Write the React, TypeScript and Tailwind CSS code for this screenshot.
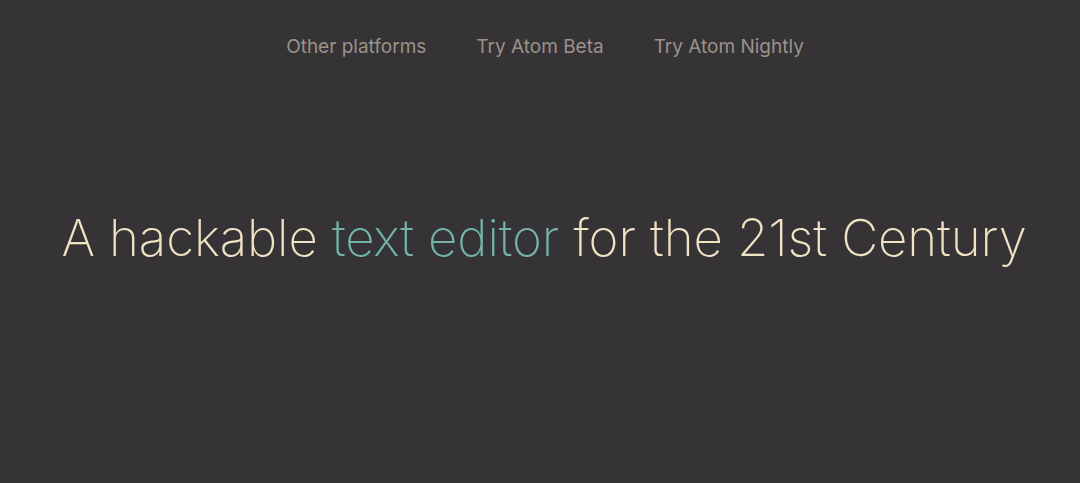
export default function App() {
  const links = ['Other platforms', 'Try Atom Beta', 'Try Atom Nightly'];

  return (
    <div className="min-h-[483px] w-full bg-[#353335] font-['Inter',sans-serif] overflow-hidden">
      {/* Top links */}
      <nav className="flex justify-center gap-[50px] pt-[34px] pl-[10px]">
        {links.map((label) => (
          <a key={label} href="#" className="text-[19px] leading-[26px] text-[#9b928a]">
            {label}
          </a>
        ))}
      </nav>

      {/* Hero */}
      <h1 className="mt-[148px] pl-[8px] text-center text-[51px] leading-[60px] font-extralight text-[#f1e2c4] tracking-[-0.1px]">
        A hackable <span className="text-[#74b4a6]">text editor</span> for the 21st Century
      </h1>
    </div>
  );
}
